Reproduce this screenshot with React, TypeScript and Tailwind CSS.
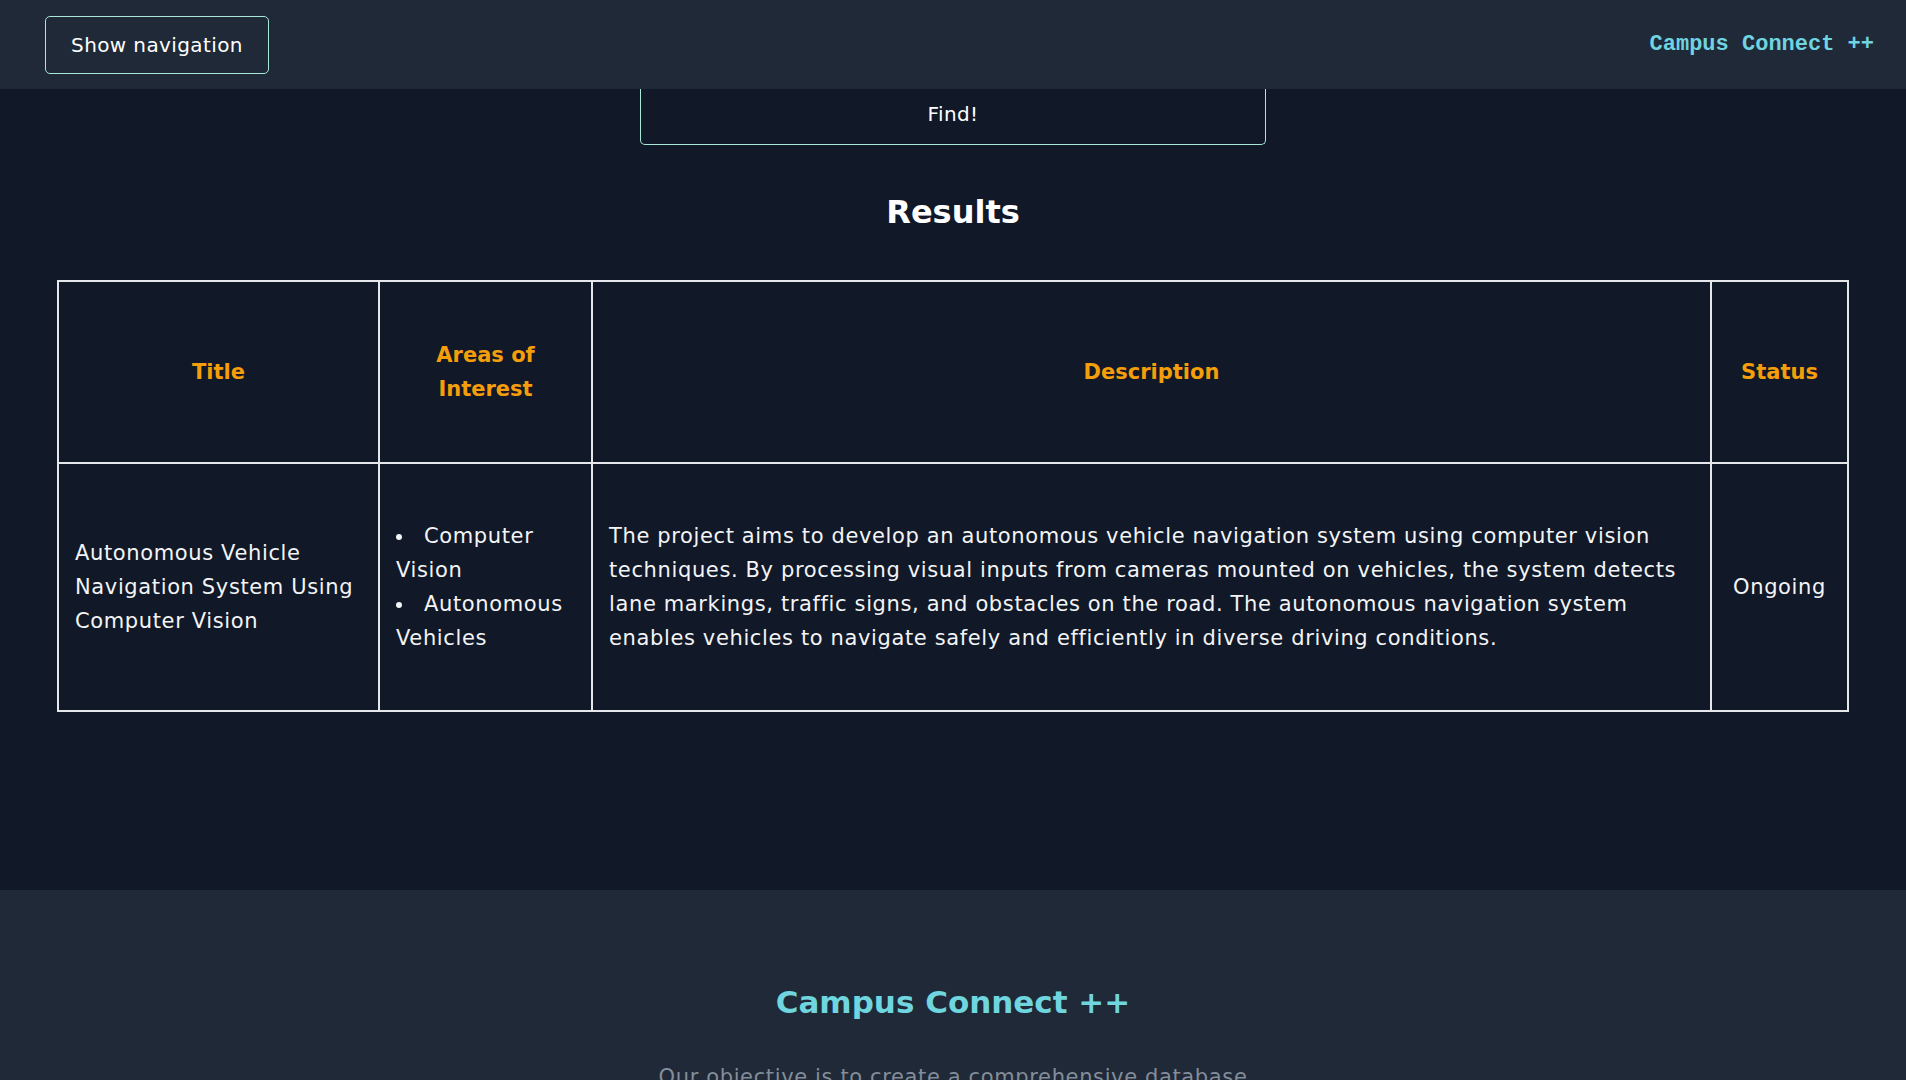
import React from "react";

interface Project {
    id: number,
    title: string,
    areas: string[],
    description: string,
    status: string,
}

const projects: Project[] = [
    {
        id: 1,
        title: "Autonomous Vehicle Navigation System Using Computer Vision",
        areas: ["Computer Vision", "Autonomous Vehicles"],
        description:
            "The project aims to develop an autonomous vehicle navigation system using computer vision techniques. By processing visual inputs from cameras mounted on vehicles, the system detects lane markings, traffic signs, and obstacles on the road. The autonomous navigation system enables vehicles to navigate safely and efficiently in diverse driving conditions.",
        status: "Ongoing",
    },
];

const Header = () => {
    return (
        <header className="h-[89px] bg-[#1f2937] flex items-center justify-between pl-[45px] pr-[32px]">
            <button className="h-[58px] w-[224px] border border-[#a7e8d8] rounded-[5px] text-white text-[20px] tracking-[0.02em]">
                Show navigation
            </button>
            <span className="font-['Liberation_Mono',monospace] font-bold text-[22px] text-[#6fd3e0]">
                Campus Connect ++
            </span>
        </header>
    );
};

const ResultsTable = ({items}: { items: Project[] }) => {
    return (
        <table className="w-full table-fixed border-collapse text-[21px] leading-[34px] tracking-[0.03em] text-[#f3f4f6]">
            <colgroup>
                <col className="w-[321px]"/>
                <col className="w-[213px]"/>
                <col/>
                <col className="w-[137px]"/>
            </colgroup>
            <thead>
            <tr>
                <th className="border-2 border-[#e5e7eb] px-4 py-[56px] text-[21px] tracking-normal font-bold text-[#f59e0b]">Title</th>
                <th className="border-2 border-[#e5e7eb] px-4 py-[56px] text-[21px] tracking-normal font-bold text-[#f59e0b]">Areas of Interest</th>
                <th className="border-2 border-[#e5e7eb] px-4 py-[56px] text-[21px] tracking-normal font-bold text-[#f59e0b]">Description</th>
                <th className="border-2 border-[#e5e7eb] px-4 py-[56px] text-[21px] tracking-normal font-bold text-[#f59e0b]">Status</th>
            </tr>
            </thead>
            <tbody>
            {items.map(item => (
                <tr key={item.id}>
                    <td className="border-2 border-[#e5e7eb] px-4 py-[55px] align-middle">{item.title}</td>
                    <td className="border-2 border-[#e5e7eb] px-4 py-[55px] align-middle">
                        <ul className="list-disc list-inside">
                            {item.areas.map(area => (
                                <li key={area}>{area}</li>
                            ))}
                        </ul>
                    </td>
                    <td className="border-2 border-[#e5e7eb] px-4 py-[55px] align-middle">{item.description}</td>
                    <td className="border-2 border-[#e5e7eb] px-2 py-[55px] align-middle text-center">{item.status}</td>
                </tr>
            ))}
            </tbody>
        </table>
    );
};

export default function App() {
    return (
        <div className="min-h-screen bg-[#111827] font-['DejaVu_Sans',sans-serif]">
            <Header/>

            <main className="bg-[#111827] pb-[178px]">
                <button className="mx-auto flex items-center justify-center w-[626px] h-[56px] pb-[6px] border border-t-0 border-[#a7e8d8] rounded-b-[5px] text-white text-[20px] tracking-[0.02em]">
                    Find!
                </button>

                <h2 className="mt-[47px] text-center text-[32px] leading-[40px] font-bold text-white">Results</h2>

                <div className="mt-[48px] px-[57px]">
                    <ResultsTable items={projects}/>
                </div>
            </main>

            <footer className="bg-[#1f2937] pt-[92px] pb-[60px] text-center">
                <h3 className="text-[31px] leading-[40px] font-bold text-[#6fd5df]">Campus Connect ++</h3>
                <p className="mt-[40px] text-[21px] leading-[30px] tracking-[0.03em] text-[#848d9a]">
                    Our objective is to create a comprehensive database
                </p>
            </footer>
        </div>
    );
}
